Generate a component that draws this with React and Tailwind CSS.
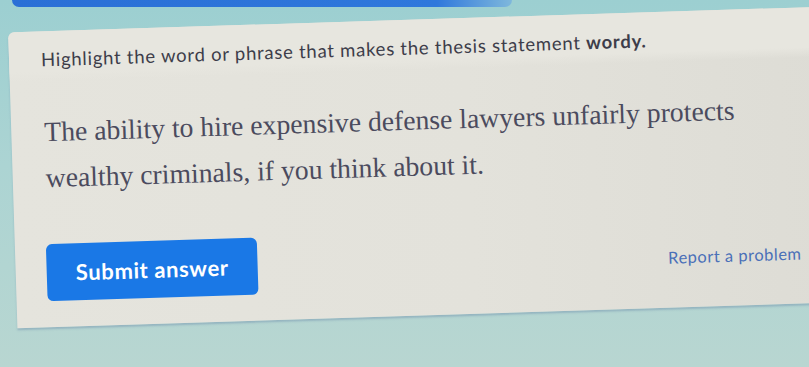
export default function App() {
  return (
    <div className="w-[809px] h-[367px] overflow-hidden flex flex-col bg-[linear-gradient(180deg,#9ccfd1_0%,#acd4d3_45%,#b8d6d1_100%)]">
      <div className="h-[20px] pl-[12px] flex">
        <div className="w-[500px] h-[7px] bg-[linear-gradient(90deg,#2a6fd6_0%,#2f78dc_85%,#7fb8dc_100%)] rounded-b-[7px]" />
      </div>
      <div className="ml-[13px] w-[830px] h-[296px] shrink-0 rotate-[-1.8deg] origin-[391px_160px] bg-[linear-gradient(90deg,#e5e4dd_0%,#e3e2db_55%,#dddcd5_100%)] rounded-tl-[6px] flex flex-col shadow-[0_2px_2px_rgba(90,120,160,0.35)]">
        <div className="h-[50px] pl-[32px] pt-[17px] bg-[linear-gradient(180deg,#e7e6df_0%,#e7e6df_80%,rgba(231,230,223,0)_100%)] rounded-tl-[6px]">
          <p className="text-[18.5px] leading-[22px] tracking-[0.75px] text-[#3d3d4a] font-['Lato',sans-serif] whitespace-nowrap">
            Highlight the word or phrase that makes the thesis statement <span className="font-bold">wordy.</span>
          </p>
        </div>
        <div className="pl-[33px] mt-[27.65px] font-['Liberation_Serif',serif] text-[27.7px] leading-[46px] text-[#4b4b5e] whitespace-nowrap">
          <p>The ability to hire expensive defense lawyers unfairly protects</p>
          <p>wealthy criminals, if you think about it.</p>
        </div>
        <div className="mt-[43px] pl-[31px] pr-[44px] flex items-center justify-between">
          <button className="w-[211px] h-[57px] rounded-[6px] bg-[#1a78e6] text-white font-['Lato',sans-serif] font-bold text-[22px] tracking-[0.6px] flex items-center justify-center">
            Submit answer
          </button>
          <span className="font-['Lato',sans-serif] text-[16.5px] tracking-[0.5px] text-[#4a70b8] mt-[10px]">Report a problem</span>
        </div>
      </div>
    </div>
  );
}
